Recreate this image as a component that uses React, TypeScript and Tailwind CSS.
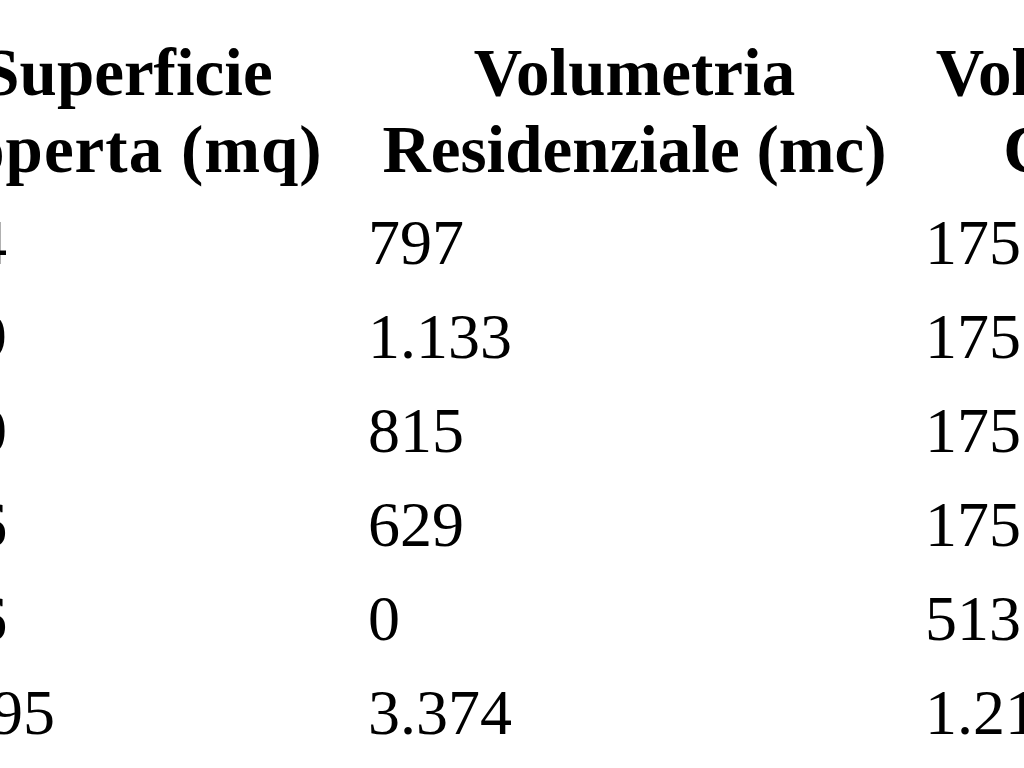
const headers = [
  ['Superficie', 'coperta (mq)'],
  ['Volumetria', 'Residenziale (mc)'],
  ['Volumetria', 'Comm.'],
];

const rows = [
  ['374', '797', '175'],
  ['459', '1.133', '175'],
  ['310', '815', '175'],
  ['426', '629', '175'],
  ['126', '0', '513'],
  ['1.695', '3.374', '1.213'],
];

export default function App() {
  return (
    <div className="w-[1024px] h-[768px] overflow-hidden bg-white text-black font-['Liberation_Serif','Times_New_Roman',serif]">
      <div className="ml-[-101px] grid grid-cols-[457px_557px_367px] w-[1381px]">
        {headers.map((h, i) => (
          <div
            key={i}
            className="px-3 pt-[34px] pb-[8px] text-center font-bold text-[67px] leading-[77px] whitespace-nowrap"
          >
            <div>{h[0]}</div>
            <div className={i === 0 ? 'tracking-[1px] pl-[8px]' : i === 2 ? 'pl-[24px]' : ''}>{h[1]}</div>
          </div>
        ))}
        {rows.map((r, ri) =>
          r.map((v, ci) => (
            <div
              key={`${ri}-${ci}`}
              className="px-3 text-left text-[64px] leading-[94px] whitespace-nowrap"
            >
              {v}
            </div>
          ))
        )}
      </div>
    </div>
  );
}
